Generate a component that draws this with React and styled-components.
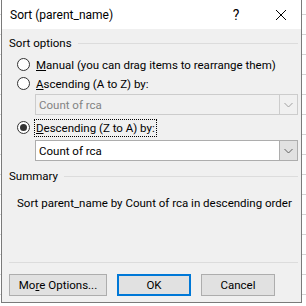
import React from 'react';
import styled, { createGlobalStyle } from 'styled-components';

const GlobalStyle = createGlobalStyle`
    html, body {
        margin: 0;
        padding: 0;
        background: #ffffff;
    }
    body {
        width: 306px;
        height: 306px;
        overflow: hidden;
        font-family: Roboto, "Liberation Sans", sans-serif;
        font-size: 11.5px;
        color: #000000;
    }
`;

const Sheet = styled.div`
    width: 306px;
    height: 306px;
    padding-left: 1px;
    box-sizing: border-box;
    background-color: #ffffff;
    background-image: linear-gradient(#d4d4d4 1px, transparent 1px);
    background-size: 100% 20px;
    background-position: 0 14px;
`;

const Window = styled.div`
    width: 301px;
    height: 303px;
    box-sizing: border-box;
    border: 1px solid #7a7a7a;
    border-top: none;
    background: #f0f0f0;
    display: flex;
    flex-direction: column;
    white-space: nowrap;
`;

const TitleBar = styled.div`
    height: 29px;
    flex-shrink: 0;
    background: #ffffff;
    display: flex;
    align-items: center;
    padding-left: 8px;
`;

const Title = styled.div`
    flex: 1;
    font-size: 12px;
`;

const TitleButton = styled.div`
    width: 40px;
    height: 29px;
    margin-right: ${p => p.$gap || 0}px;
    display: flex;
    align-items: center;
    justify-content: center;
    font-size: 14px;
`;

const Content = styled.div`
    flex: 1;
    display: flex;
    flex-direction: column;
    padding: 6px 3px 6px 7px;
`;

const GroupHeader = styled.div`
    display: flex;
    align-items: center;
    height: 16px;
    gap: 6px;
    margin-top: ${p => p.$top || 0}px;

    &::after {
        content: '';
        flex: 1;
        height: 1px;
        background: #dcdcdc;
    }
`;

const RadioRow = styled.div`
    display: flex;
    align-items: center;
    height: 19px;
    padding-left: 8px;
    gap: 5px;
    margin-top: ${p => p.$top || 0}px;
`;

const RadioCircle = styled.span`
    width: 13px;
    height: 13px;
    flex-shrink: 0;
    box-sizing: border-box;
    border-radius: 50%;
    border: 1px solid #333333;
    background: #ffffff;
    display: flex;
    align-items: center;
    justify-content: center;

    &::after {
        content: '';
        width: 7px;
        height: 7px;
        border-radius: 50%;
        background: #333333;
        display: ${p => (p.$checked ? 'block' : 'none')};
    }
`;

const RadioLabel = styled.span`
    line-height: 16px;
    padding: 0 1px;
    border: 1px dotted ${p => (p.$focus ? '#000000' : 'transparent')};
    margin-left: -1px;
`;

const Combo = styled.div`
    margin-left: 26px;
    margin-top: ${p => p.$top || 0}px;
    height: 21px;
    box-sizing: border-box;
    display: flex;
    border: 1px solid ${p => (p.$disabled ? '#cccccc' : '#adadad')};
    background: ${p => (p.$disabled ? '#f0f0f0' : '#ffffff')};
    color: ${p => (p.$disabled ? '#838383' : '#000000')};
`;

const ComboText = styled.div`
    flex: 1;
    display: flex;
    align-items: center;
    padding-left: 3px;
`;

const ComboArrow = styled.div`
    width: 17px;
    display: flex;
    align-items: center;
    justify-content: center;
    border-left: 1px solid ${p => (p.$disabled ? '#cccccc' : '#adadad')};
    background: ${p => (p.$disabled ? '#f0f0f0' : '#e1e1e1')};
    color: ${p => (p.$disabled ? '#a0a0a0' : '#606060')};
`;

const SummaryText = styled.div`
    margin-top: 11px;
    padding-left: 8px;
    line-height: 16px;
`;

const Spacer = styled.div`
    flex: 1;
`;

const Separator = styled.div`
    height: 1px;
    background: #dcdcdc;
`;

const ButtonRow = styled.div`
    display: flex;
    gap: 10px;
    margin-top: 11px;
`;

const Button = styled.div`
    height: 22px;
    width: ${p => p.$w}px;
    box-sizing: border-box;
    display: flex;
    align-items: center;
    justify-content: center;
    background: #e1e1e1;
    border: ${p => (p.$default ? '2px solid #0078d7' : '1px solid #adadad')};
`;

const Chevron = () => (
    <svg width="9" height="6" viewBox="0 0 9 6">
        <path d="M0.5 1 L4.5 5 L8.5 1" fill="none" stroke="currentColor" strokeWidth="1" />
    </svg>
);

const CloseIcon = () => (
    <svg width="10" height="10" viewBox="0 0 10 10">
        <path d="M0 0 L10 10 M10 0 L0 10" stroke="#000000" strokeWidth="1" />
    </svg>
);

const App = () => {
    return (
        <>
            <GlobalStyle />
            <Sheet>
                <Window>
                    <TitleBar>
                        <Title>Sort (parent_name)</Title>
                        <TitleButton $gap={5}>?</TitleButton>
                        <TitleButton><CloseIcon /></TitleButton>
                    </TitleBar>
                    <Content>
                        <GroupHeader>Sort options</GroupHeader>
                        <RadioRow $top={4}>
                            <RadioCircle />
                            <RadioLabel><u>M</u>anual (you can drag items to rearrange them)</RadioLabel>
                        </RadioRow>
                        <RadioRow>
                            <RadioCircle />
                            <RadioLabel><u>A</u>scending (A to Z) by:</RadioLabel>
                        </RadioRow>
                        <Combo $disabled $top={1}>
                            <ComboText>Count of rca</ComboText>
                            <ComboArrow $disabled><Chevron /></ComboArrow>
                        </Combo>
                        <RadioRow $top={3}>
                            <RadioCircle $checked />
                            <RadioLabel $focus><u>D</u>escending (Z to A) by:</RadioLabel>
                        </RadioRow>
                        <Combo $top={3}>
                            <ComboText>Count of rca</ComboText>
                            <ComboArrow><Chevron /></ComboArrow>
                        </Combo>
                        <GroupHeader $top={7}>Summary</GroupHeader>
                        <SummaryText>Sort parent_name by Count of rca in descending order</SummaryText>
                        <Spacer />
                        <Separator />
                        <ButtonRow>
                            <Button $w={98}>Mo<u>r</u>e Options...</Button>
                            <Button $w={74} $default>OK</Button>
                            <Button $w={74}>Cancel</Button>
                        </ButtonRow>
                    </Content>
                </Window>
            </Sheet>
        </>
    );
};

export default App;
